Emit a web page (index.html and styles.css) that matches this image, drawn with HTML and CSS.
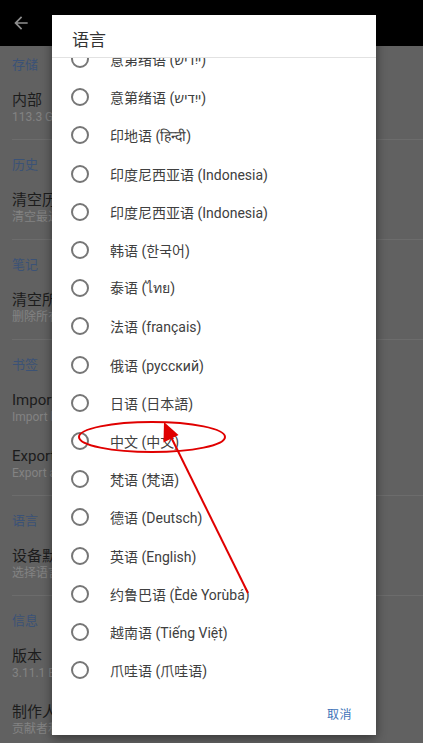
FILE: index.html
```html
<!DOCTYPE html>
<html lang="zh">
<head>
    <meta charset="UTF-8">
    <meta name="viewport" content="width=device-width, initial-scale=1.0">
    <title>语言</title>
    <link rel="stylesheet" href="styles.css">
</head>
<body>
    <div class="toolbar">
        <svg class="back" width="20" height="20" viewBox="0 0 24 24">
            <path d="M20 11H7.83l5.59-5.59L12 4l-8 8 8 8 1.41-1.41L7.83 13H20v-2z" fill="#8e8e8e"/>
        </svg>
    </div>

    <div class="settings">
        <div class="section first">
            <div class="section-title">存储</div>
            <div class="item"><div class="item-title">内部</div><div class="item-sub">113.3 GB 可用</div></div>
        </div>
        <div class="section">
            <div class="section-title">历史</div>
            <div class="item"><div class="item-title">清空历史</div><div class="item-sub">清空最近浏览记录</div></div>
        </div>
        <div class="section">
            <div class="section-title">笔记</div>
            <div class="item"><div class="item-title">清空所有笔记</div><div class="item-sub">删除所有笔记</div></div>
        </div>
        <div class="section">
            <div class="section-title">书签</div>
            <div class="item"><div class="item-title">Import</div><div class="item-sub">Import bookmarks</div></div>
            <div class="item"><div class="item-title">Export</div><div class="item-sub">Export all bookmarks</div></div>
        </div>
        <div class="section">
            <div class="section-title">语言</div>
            <div class="item"><div class="item-title">设备默认</div><div class="item-sub">选择语言</div></div>
        </div>
        <div class="section">
            <div class="section-title">信息</div>
            <div class="item"><div class="item-title">版本</div><div class="item-sub">3.11.1 Build</div></div>
            <div class="item"><div class="item-title">制作人</div><div class="item-sub">贡献者和翻译者</div></div>
        </div>
    </div>

    <div class="dialog">
        <div class="dialog-title">语言</div>
        <div class="dialog-list">
            <div class="options">
                <div class="option"><span class="radio"></span>意第绪语 (ייִדיש)</div>
                <div class="option"><span class="radio"></span>意第绪语 (ייִדיש)</div>
                <div class="option"><span class="radio"></span>印地语 (हिन्दी)</div>
                <div class="option"><span class="radio"></span>印度尼西亚语 (Indonesia)</div>
                <div class="option"><span class="radio"></span>印度尼西亚语 (Indonesia)</div>
                <div class="option"><span class="radio"></span>韩语 (한국어)</div>
                <div class="option"><span class="radio"></span>泰语 (ไทย)</div>
                <div class="option"><span class="radio"></span>法语 (français)</div>
                <div class="option"><span class="radio"></span>俄语 (русский)</div>
                <div class="option"><span class="radio"></span>日语 (日本語)</div>
                <div class="option"><span class="radio"></span>中文 (中文)</div>
                <div class="option"><span class="radio"></span>梵语 (梵语)</div>
                <div class="option"><span class="radio"></span>德语 (Deutsch)</div>
                <div class="option"><span class="radio"></span>英语 (English)</div>
                <div class="option"><span class="radio"></span>约鲁巴语 (Èdè Yorùbá)</div>
                <div class="option"><span class="radio"></span>越南语 (Tiếng Việt)</div>
                <div class="option"><span class="radio"></span>爪哇语 (爪哇语)</div>
            </div>
        </div>
        <div class="dialog-actions">
            <span class="btn">取消</span>
        </div>
    </div>

    <!-- red annotation drawn over the screenshot -->
    <svg class="markup" width="423" height="743" viewBox="0 0 423 743">
        <ellipse cx="152" cy="437" rx="73" ry="15" fill="none" stroke="#e00000" stroke-width="2"/>
        <line x1="248" y1="593" x2="171" y2="437" stroke="#e00000" stroke-width="2"/>
        <polygon points="164,422 178.5,435 163.5,442.5" fill="#e00000"/>
    </svg>
</body>
</html>
```

FILE: styles.css
```css
body {
    margin: 0;
    width: 423px;
    height: 743px;
    overflow: hidden;
    background: #616161;
    font-family: Roboto, "Noto Sans CJK SC", "DejaVu Sans", sans-serif;
}

.toolbar {
    height: 46px;
    background: #000;
    display: flex;
    align-items: center;
    padding-left: 11px;
}

/* settings page under the dim */
.settings {
    padding-left: 12px;
}

.section {
    border-top: 1px solid #6c6c6c;
}

.section-title {
    color: #3b5276;
    font-size: 13px;
    line-height: 16px;
    padding: 17px 0 10px;
}

.section.first {
    border-top: none;
}

.section.first .section-title {
    padding-top: 11px;
}

.item {
    height: 56px;
    padding-top: 7px;
    box-sizing: border-box;
}

.item-title {
    color: #1c1c1c;
    font-size: 15px;
    line-height: 20px;
    white-space: nowrap;
}

.item-sub {
    color: #838383;
    font-size: 12px;
    line-height: 15px;
    white-space: nowrap;
}

/* dialog */
.dialog {
    position: absolute;
    left: 52px;
    top: 15px;
    width: 324px;
    height: 720px;
    background: #fff;
    box-shadow: 0 3px 10px rgba(0, 0, 0, 0.45);
    display: flex;
    flex-direction: column;
}

.dialog-title {
    height: 43px;
    box-sizing: border-box;
    padding: 13px 0 0 20px;
    font-size: 17px;
    line-height: 24px;
    color: #333;
    border-bottom: 1px solid #e2e2e2;
}

.dialog-list {
    height: 634px;
    overflow: hidden;
}

.options {
    margin-top: -18px;
}

.option {
    height: 38.2px;
    display: flex;
    align-items: center;
    font-size: 14px;
    color: #404040;
    white-space: nowrap;
}

.radio {
    width: 14px;
    height: 14px;
    border: 2px solid #767676;
    border-radius: 50%;
    margin: 0 21px 0 19px;
    flex-shrink: 0;
}

.dialog-actions {
    flex: 1;
    display: flex;
    justify-content: flex-end;
    align-items: center;
    padding-right: 24px;
}

.btn {
    color: #4073b8;
    font-size: 12px;
    letter-spacing: 0.5px;
}

.markup {
    position: absolute;
    left: 0;
    top: 0;
}
```
